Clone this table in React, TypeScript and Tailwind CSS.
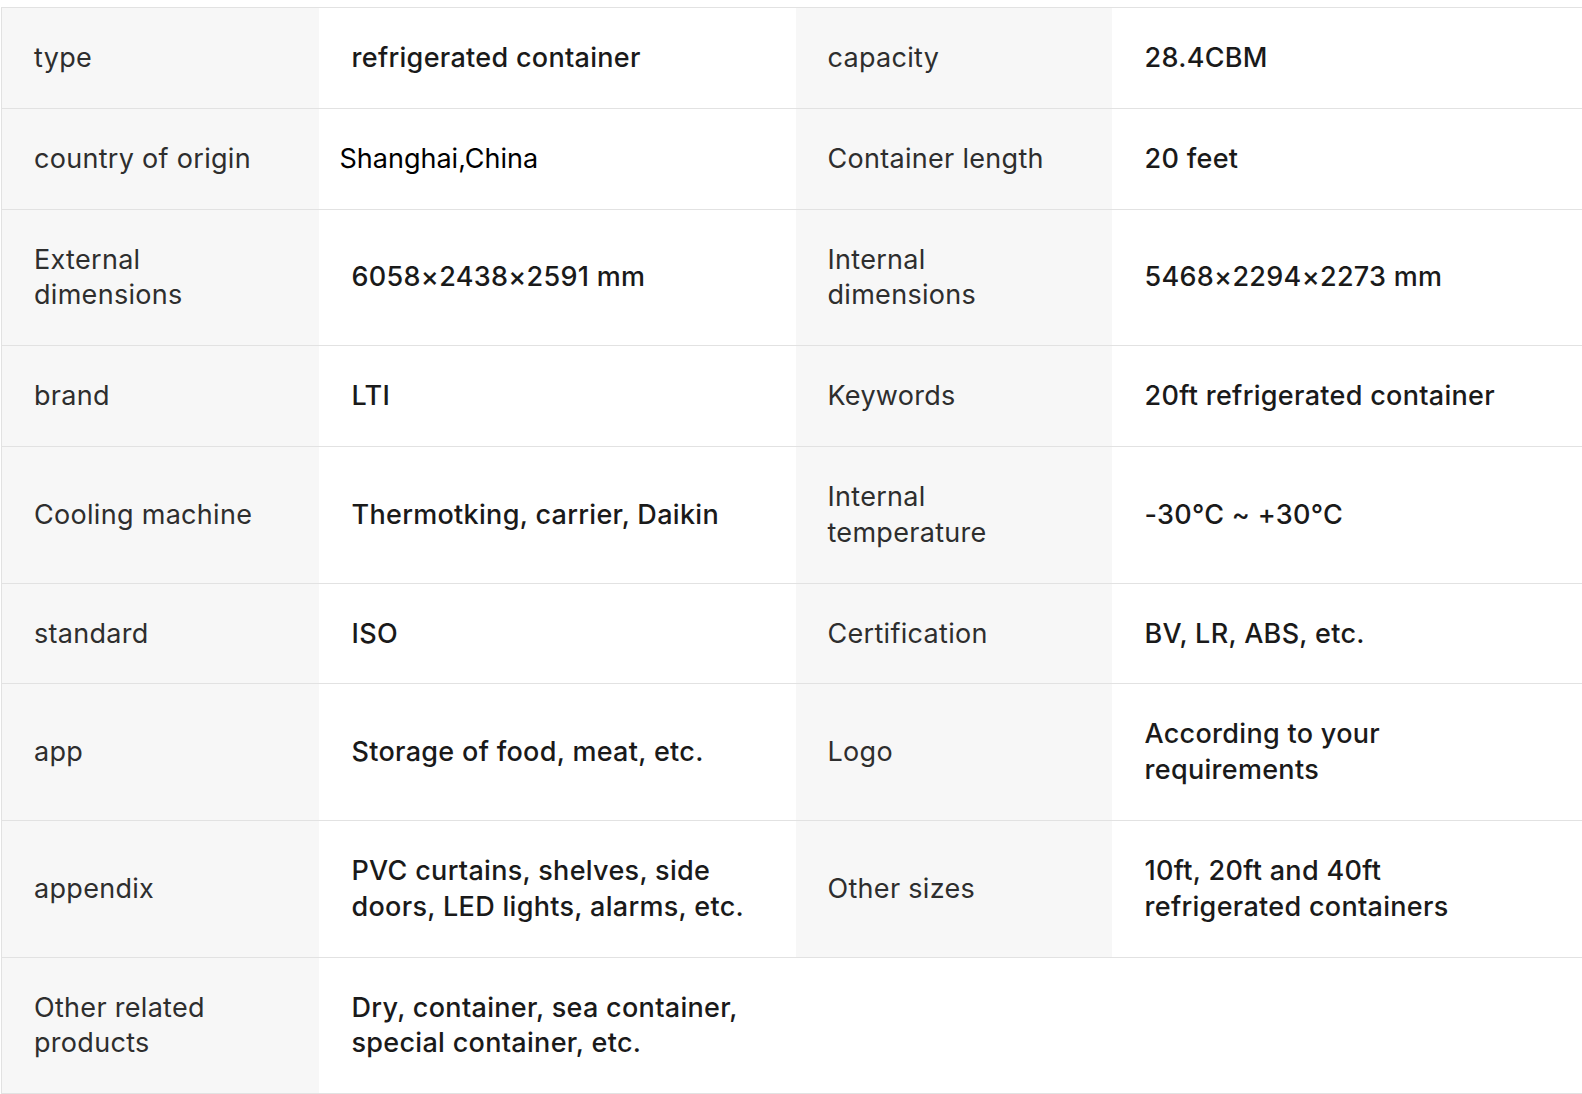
const ROWS: [string, string, string?, string?][] = [
  ["type", "refrigerated container", "capacity", "28.4CBM"],
  ["country of origin", "Shanghai,China", "Container length", "20 feet"],
  ["External dimensions", "6058×2438×2591 mm", "Internal dimensions", "5468×2294×2273 mm"],
  ["brand", "LTI", "Keywords", "20ft refrigerated container"],
  ["Cooling machine", "Thermotking, carrier, Daikin", "Internal temperature", "-30°C ~ +30°C"],
  ["standard", "ISO", "Certification", "BV, LR, ABS, etc."],
  ["app", "Storage of food, meat, etc.", "Logo", "According to your requirements"],
  ["appendix", "PVC curtains, shelves, side doors, LED lights, alarms, etc.", "Other sizes", "10ft, 20ft and 40ft refrigerated containers"],
  ["Other related products", "Dry, container, sea container, special container, etc."],
];

const cell = "border-y border-[#e2e2e2] py-8 align-middle";
const label = `${cell} bg-[#f7f7f7] pl-8 pr-[50px] font-normal text-[#2e2e2e]`;
const value = `${cell} bg-white pl-[33px] pr-[44px] font-[450] text-[#1a1a1a]`;

export default function App() {
  return (
    <div className="min-h-screen overflow-hidden bg-white pl-[1px] pt-[7px]">
      <table
        className="w-[1581px] table-fixed border-collapse border-l border-[#e2e2e2] text-left text-[27px] leading-[35.8px] tracking-[0.3px]"
        style={{ fontFamily: "Inter, 'Open Sans', sans-serif" }}
      >
        <colgroup>
          <col className="w-[317px]" />
          <col className="w-[477px]" />
          <col className="w-[316px]" />
          <col />
        </colgroup>
        <tbody>
          {ROWS.map(([k1, v1, k2, v2]) => (
            <tr key={k1}>
              <th className={label}>{k1}</th>
              <td className={value}>
                {v1 === "Shanghai,China" ? (
                  <span className="-ml-3 font-normal tracking-normal text-black">{v1}</span>
                ) : (
                  v1
                )}
              </td>
              {k2 ? (
                <>
                  <th className={label}>{k2}</th>
                  <td className={`${value} pr-[80px]`}>{v2}</td>
                </>
              ) : (
                <td colSpan={2} className="border-y border-[#e2e2e2] bg-white" />
              )}
            </tr>
          ))}
        </tbody>
      </table>
    </div>
  );
}
